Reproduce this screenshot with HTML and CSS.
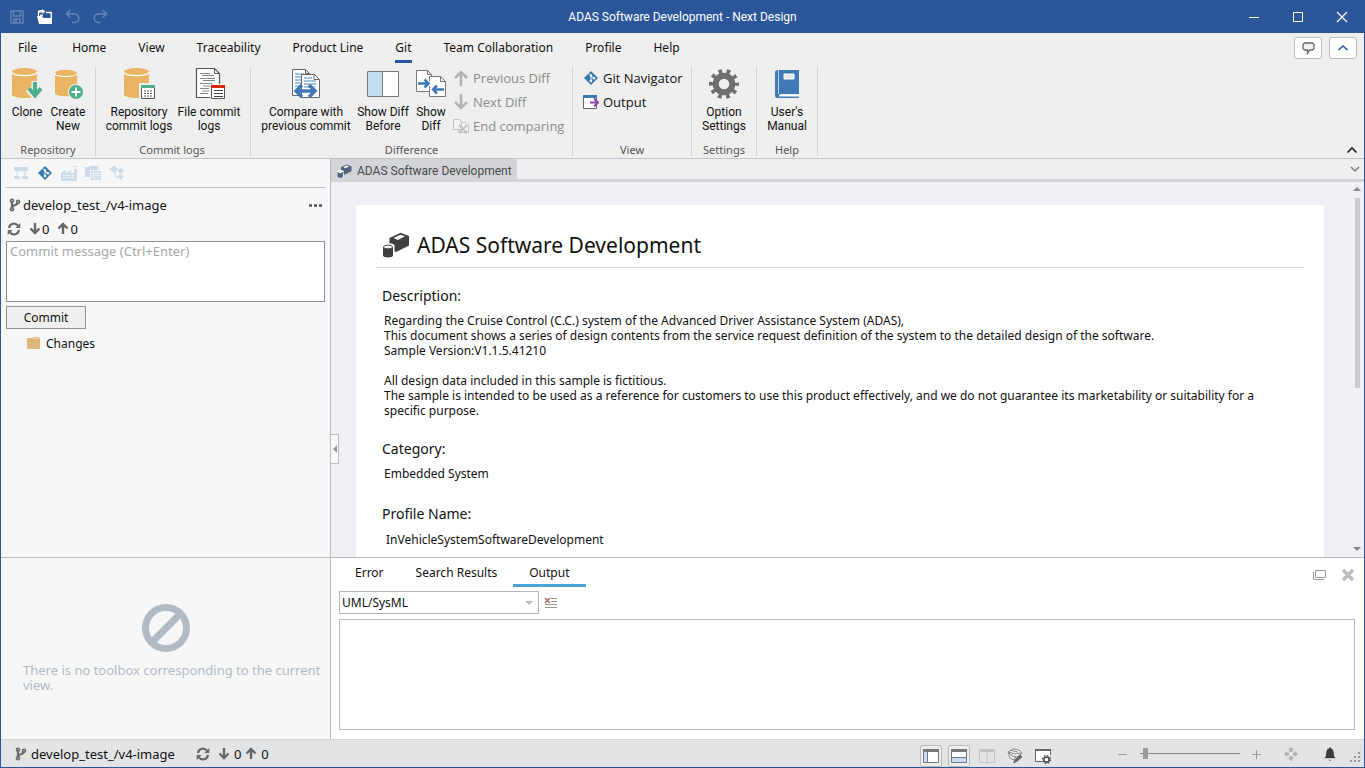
FILE: index.html
```
<!DOCTYPE html>
<html lang="en">
<head>
    <meta charset="UTF-8">
    <meta name="viewport" content="width=device-width, initial-scale=1.0">
    <title>ADAS Software Development - Next Design</title>
    <link rel="stylesheet" href="styles.css">
</head>
<body>
    <!-- Shared icons -->
    <svg class="icon-defs" aria-hidden="true">
        <symbol id="i-branch" viewBox="0 0 12 14">
            <path d="M3 3v8M3 9c0-2 6-1 6-5" fill="none" stroke="#6a6a6a" stroke-width="2.2"/>
            <circle cx="3" cy="2.700" r="2.300" fill="#6a6a6a"/><circle cx="3" cy="11.300" r="2.300" fill="#6a6a6a"/><circle cx="9" cy="3.700" r="2.300" fill="#6a6a6a"/>
            <path d="M3 2.200v1M3 10.800v1M9 3.200v1" stroke="#eee" stroke-width="1"/>
        </symbol>
        <symbol id="i-sync" viewBox="0 0 14 14">
            <path d="M2 6a5 5 0 0 1 9-2.300M12 8a5 5 0 0 1-9 2.300" fill="none" stroke="#6a6a6a" stroke-width="2.2"/>
            <path d="M13.300 1v5h-5zM.7 13V8h5z" fill="#6a6a6a"/>
        </symbol>
        <symbol id="i-down" viewBox="0 0 12 14">
            <path d="M6 1v10M1.500 6.500 6 11l4.500-4.500" fill="none" stroke="#666" stroke-width="2.4"/>
        </symbol>
        <symbol id="i-up" viewBox="0 0 12 14">
            <path d="M6 12V2M1.500 6.500 6 2l4.500 4.500" fill="none" stroke="#666" stroke-width="2.4"/>
        </symbol>
        <symbol id="i-git" viewBox="0 0 14 14">
            <path d="M7 0l7 7-7 7-7-7z" fill="#3a78b0"/>
            <path d="M5 2.500 7 4.500V10M7 5l3 2.500" fill="none" stroke="#fff" stroke-width="1"/>
            <circle cx="7" cy="4.500" r="1.200" fill="#fff"/><circle cx="7" cy="10" r="1.300" fill="#fff"/><circle cx="10" cy="7.300" r="1.200" fill="#fff"/>
        </symbol>
        <symbol id="i-model" viewBox="0 0 28 26">
            <path d="M7.500 6 18.500.800 27 4v9.500l-13 6.500-6.500-3z" fill="currentColor"/>
            <path d="m11.500 6 7-3.300 4.500 1.600-7 3.700z" fill="#fff"/>
            <path d="M0 13.500c0-3 12-3 12.500 0V26H0z" fill="#fff"/>
            <path d="M1 15v8.500c0 2.600 10 2.600 10 0V15z" fill="currentColor"/>
            <ellipse cx="6" cy="15" rx="4.500" ry="1.900" fill="#fff" stroke="currentColor"/>
        </symbol>
        <symbol id="i-model-small" viewBox="0 0 28 26">
            <path d="M7.500 6 18.500.800 27 4v9.500l-13 6.500-6.500-3z" fill="currentColor"/>
            <path d="m11.500 6 7-3.300 4.500 1.600-7 3.700z" fill="#fff"/>
            <path d="M0 13.500c0-3 12-3 12.500 0V26H0z" fill="#eee"/>
            <path d="M1 15v8.500c0 2.600 10 2.600 10 0V15z" fill="currentColor"/>
            <ellipse cx="6" cy="15.500" rx="3.500" ry="1.500" fill="#fff"/>
        </symbol>
        <symbol id="i-db" viewBox="0 0 26 31">
            <path d="M0 3.500v23c0 4.600 25 4.600 25 0v-23z" fill="#e9b562"/>
            <ellipse cx="12.500" cy="4" rx="12.500" ry="4" fill="#e9b562"/>
            <path d="M0 4c0 4.800 25 4.800 25 0" fill="none" stroke="#fff" stroke-width="1.200"/>
        </symbol>
    </svg>

    <div class="window">
        <header class="titlebar">
            <div class="quick-access">
                <button class="quick-btn dim" aria-label="Save"><svg width="14" height="14" viewBox="0 0 14 14"><path d="M1 1h12v12H1zM3.500 1v5h7V1M4 13V9h6v4" fill="none" stroke="#fff" stroke-width="1.500"/><path d="M5 10h2v3H5z" fill="#fff"/></svg></button>
                <button class="quick-btn" aria-label="Open"><svg width="15" height="15" viewBox="0 0 15 15"><path d="M9 3.500h5.300v10.800H2.500" fill="none" stroke="#fff" stroke-width="1.300"/><path d="M0 7h5l1.500 2H14v6H2z" fill="#fff"/><path d="M1.500 7V3" stroke="#fff" stroke-width="1.300"/><path d="M3.500 5.500h2L6 7H3zM1 2c1-1 2.500-1.200 4-1V0l3.500 2.500L5.500 5V3.500H1z" fill="#fff"/></svg></button>
                <button class="quick-btn dim" aria-label="Undo"><svg width="15" height="15" viewBox="0 0 15 15"><path d="M5.500 1 1.500 4.800l4 3.800M2 4.800h7.500a4.300 4.300 0 0 1 0 8.700H7" fill="none" stroke="#fff" stroke-width="1.700"/></svg></button>
                <button class="quick-btn dim" aria-label="Redo"><svg width="15" height="15" viewBox="0 0 15 15"><path d="m9.500 1 4 3.800-4 3.800M13 4.800H5.500a4.300 4.300 0 0 0 0 8.700H8" fill="none" stroke="#fff" stroke-width="1.700"/></svg></button>
            </div>
            <h1 class="app-title">ADAS Software Development - Next Design</h1>
            <div class="window-controls">
                <button class="window-btn" aria-label="Minimize"><svg width="12" height="12"><path d="M1 6.500h10" stroke="#fff"/></svg></button>
                <button class="window-btn" aria-label="Maximize"><svg width="12" height="12"><path d="M1.500 1.500h9v9h-9z" fill="none" stroke="#fff"/></svg></button>
                <button class="window-btn" aria-label="Close"><svg width="12" height="12"><path d="m1 1 10 10M11 1 1 11" stroke="#fff" stroke-width="1.200"/></svg></button>
            </div>
        </header>

        <nav class="menu">
            <a class="menu-item file" href="#">File</a>
            <a class="menu-item" href="#">Home</a>
            <a class="menu-item" href="#">View</a>
            <a class="menu-item" href="#">Traceability</a>
            <a class="menu-item" href="#">Product Line</a>
            <a class="menu-item active" href="#">Git</a>
            <a class="menu-item" href="#">Team Collaboration</a>
            <a class="menu-item" href="#">Profile</a>
            <a class="menu-item" href="#">Help</a>
            <div class="menu-actions">
                <button class="box-btn" aria-label="Feedback"><svg width="13" height="13" viewBox="0 0 13 13"><path d="M2.500 1h8l1.500 1.500v4L10.500 8H7.500L5.500 11.500V8h-3L1 6.500v-4z" fill="#f4f4f4" stroke="#666" stroke-width="1.300"/></svg></button>
                <button class="box-btn" aria-label="Pin ribbon"><svg width="12" height="12"><path d="m1.500 8 4.500-4 4.500 4" fill="none" stroke="#2b579a" stroke-width="1.600"/></svg></button>
            </div>
        </nav>

        <section class="ribbon">
            <div class="group">
                <div class="group-buttons">
                    <button class="big-btn w-small">
                        <svg width="34" height="34" viewBox="0 0 34 34"><use href="#i-db" x="2" y="1" width="26" height="31"/><path d="M25 14v15M18.500 22l6.500 7 6.500-7" fill="none" stroke="#efefef" stroke-width="7"/><path d="M25 15v13M19 21.500l6 7 6-7" fill="none" stroke="#4caf8a" stroke-width="4"/></svg>
                        <span>Clone</span>
                    </button>
                    <button class="big-btn w-create">
                        <svg width="34" height="34" viewBox="0 0 34 34"><use href="#i-db" x="4" y="2" width="23" height="29"/><circle cx="25" cy="25" r="8" fill="#efefef"/><circle cx="25" cy="25" r="7" fill="#4caf8a"/><path d="M20.500 25h9M25 20.500v9" stroke="#fff" stroke-width="2"/></svg>
                        <span>Create<br>New</span>
                    </button>
                </div>
                <div class="group-name">Repository</div>
            </div>

            <div class="group group-logs">
                <div class="group-buttons">
                    <button class="big-btn w-repo">
                        <svg width="34" height="34" viewBox="0 0 34 34"><use href="#i-db" x="2" y="1" width="26" height="31"/><path d="M18.500 17.500h14v15h-14z" fill="#fff" stroke="#efefef" stroke-width="3"/><path d="M19.500 18.500h13v13h-13z" fill="#fff" stroke="#555"/><path d="M19 18h14v3H19z" fill="#4caf8a"/><path d="M22 24h2m1 0h2m1 0h2M22 26.500h2m1 0h2m1 0h2M22 29h2m1 0h2m1 0h2" stroke="#555"/></svg>
                        <span>Repository<br>commit logs</span>
                    </button>
                    <button class="big-btn w-file">
                        <svg width="34" height="34" viewBox="0 0 34 34"><path d="M4.500 1.500h18l5 5v24h-23z" fill="#fff" stroke="#555" stroke-width="1.200"/><path d="M22.500 1.500v5h5" fill="none" stroke="#555"/><path d="M8 6.500h10M10 8.500h12M8 11.500h15M11 13.500h12M8 16.500h12M11 19h7M8 21.500h9M10 24h7M8 26.500h8" stroke="#888"/><path d="M18 17h16v16H18z" fill="#efefef"/><path d="M19.500 18.500h13v13h-13z" fill="#fff" stroke="#555"/><path d="M19 18h14v3H19z" fill="#db2b0b"/><path d="M22 23.500h9M22 26.500h9M22 29.500h9" stroke="#444"/></svg>
                        <span>File commit<br>logs</span>
                    </button>
                </div>
                <div class="group-name">Commit logs</div>
            </div>

            <div class="group">
                <div class="group-buttons">
                    <button class="big-btn w-compare">
                        <svg width="34" height="34" viewBox="0 0 34 34"><path d="M3.500 2.500h13l4 4v22h-17z" fill="#fff" stroke="#666"/><path d="M16.500 2.500v4h4" fill="none" stroke="#666"/><path d="M6 7h9M6 10h11M6 13h7M6 16h7M6 19h7" stroke="#83b3da" stroke-width="1.500"/><path d="M12.500 7.500h13l5 5v18h-18z" fill="#fff" stroke="#666"/><path d="M25 7.500v5h5" fill="none" stroke="#666"/><path d="M15 11h8M15 14h12M15 17h12M15 20h11" stroke="#83b3da" stroke-width="1.500"/><path d="m13 18-6 6 6 6M20 18l6 6-6 6M8 24h17" fill="none" stroke="#3f79b5" stroke-width="3.400"/></svg>
                        <span>Compare with<br>previous commit</span>
                    </button>
                    <button class="big-btn w-before">
                        <svg width="34" height="34" viewBox="0 0 34 34"><path d="M1.500 4.500h31v25h-31z" fill="#fff" stroke="#777"/><path d="M2 5h15v24H2z" fill="#c3e0f3"/><path d="M16.500 4.500v25" stroke="#777"/></svg>
                        <span>Show Diff<br>Before</span>
                    </button>
                    <button class="big-btn w-small">
                        <svg width="34" height="34" viewBox="0 0 34 34"><path d="M2.500 3.500h11l4 4v17h-15zM13.500 3.500v4h4" fill="#fff" stroke="#777"/><path d="M15.500 9.500h11l5 5v15h-16zM26.500 9.500v5h5" fill="#fff" stroke="#777"/><path d="M4 16.500h11M10.500 12l4.500 4.500-4.500 4.500" fill="none" stroke="#fff" stroke-width="4"/><path d="M4 16.500h10M10.500 12.500l4 4-4 4" fill="none" stroke="#3f79b5" stroke-width="2.500"/><path d="M30 22.500H19M23 18.500l-4 4 4 4" fill="none" stroke="#3f79b5" stroke-width="2.500"/></svg>
                        <span>Show<br>Diff</span>
                    </button>
                    <div class="small-list w-diff">
                        <button class="small-btn" disabled><svg width="16" height="16"><path d="M8 16V3M2 8l6-6 6 6" fill="none" stroke="#b3b3b3" stroke-width="2.600"/></svg>Previous Diff</button>
                        <button class="small-btn" disabled><svg width="16" height="16"><path d="M8 0v13M2 8l6 6 6-6" fill="none" stroke="#b3b3b3" stroke-width="2.600"/></svg>Next Diff</button>
                        <button class="small-btn" disabled><svg width="16" height="16"><path d="M.500 1.500h6l2 2v8h-8zM9 4.500h4l2.500 2.500v7.500H5.500v-3" fill="#f4f4f4" stroke="#c6c6c6"/><path d="m6 7 8 8M14 7l-8 8" stroke="#c0c0c0" stroke-width="2"/></svg>End comparing</button>
                    </div>
                </div>
                <div class="group-name">Difference</div>
            </div>

            <div class="group group-view">
                <div class="group-buttons">
                    <div class="small-list w-view">
                        <button class="small-btn"><svg width="16" height="16"><use href="#i-git" x="1" y="1" width="14" height="14"/></svg>Git Navigator</button>
                        <button class="small-btn"><svg width="16" height="16"><path d="M.500 1.500h13v13H.500z" fill="#fff" stroke="#666"/><path d="M0 1h14v3H0z" fill="#3a78b0"/><path d="M11 6h5v5h-5z" fill="#efefef"/><path d="M7 8.500h8M11 4.500l4 4-4 4" fill="none" stroke="#8e44ad" stroke-width="2"/></svg>Output</button>
                    </div>
                </div>
                <div class="group-name">View</div>
            </div>

            <div class="group">
                <div class="group-buttons">
                    <button class="big-btn w-option">
                        <svg width="34" height="34" viewBox="-17 -17 34 34"><circle r="8.300" fill="none" stroke="#6f6f6f" stroke-width="6"/><circle r="12.500" fill="none" stroke="#6f6f6f" stroke-width="5" stroke-dasharray="3.600 4.254" stroke-dashoffset="1.800"/></svg>
                        <span>Option<br>Settings</span>
                    </button>
                </div>
                <div class="group-name">Settings</div>
            </div>

            <div class="group">
                <div class="group-buttons">
                    <button class="big-btn w-manual">
                        <svg width="34" height="34" viewBox="0 0 34 34"><path d="M8 3h21v24H10v2h19v2H7a2 2 0 0 1-2-2V5c0-1 1-2 3-2z" fill="#3f7ab6"/><path d="M9 28h20v1.500H9z" fill="#fff"/><path d="M8.500 3v24" stroke="#dce8f4" stroke-width=".8"/><path d="M14 7h10v5H14z" fill="#dfe9f6" stroke="#fff"/></svg>
                        <span>User's<br>Manual</span>
                    </button>
                </div>
                <div class="group-name">Help</div>
            </div>
            <button class="collapse-btn" aria-label="Collapse ribbon"><svg width="12" height="12"><path d="m1.500 8.500 4.500-4.500 4.500 4.500" fill="none" stroke="#222" stroke-width="1.600"/></svg></button>
        </section>

        <main class="workspace">
            <aside class="sidebar">
                <section class="navigator">
                    <div class="nav-icons">
                        <button class="icon-btn" aria-label="Model"><svg width="16" height="16"><path d="M1 2h14v4H1zM1 11h6v3H1zM9 11h6v3H9z" fill="#ccdbe7"/><path d="M4 6v6M12 6v6" stroke="#ccdbe7"/></svg></button>
                        <button class="icon-btn" aria-label="Git"><svg width="16" height="16"><use href="#i-git" x="1" y="1" width="14" height="14"/></svg></button>
                        <button class="icon-btn" aria-label="Product line"><svg width="16" height="16"><path d="M0 16V8l5-3v3l5-3v3h3V4h3v12zM12 1h4v1h-4z" fill="#ccdbe7"/><path d="M2 10.500h12M2 12.500h12" stroke="#f7f7f7" stroke-dasharray="2 1"/></svg></button>
                        <button class="icon-btn" aria-label="Documents"><svg width="16" height="16"><path d="M0 2h4l1-1h8v4H5v7H0z" fill="#ccdbe7"/><path d="M6.700 6.700h8.600v7.600H6.700zM8 9.500h6M8 12h6" fill="#f7f7f7" stroke="#ccdbe7" stroke-width="1.500"/></svg></button>
                        <button class="icon-btn" aria-label="Relations"><svg width="16" height="16"><path d="m0 4.500 5-4 4 3-3.500 4.500zM11 3l4 2-3 4-3.500-3zM11 9l4 2.500-3 3.500-4-3z" fill="#ccdbe7"/><path d="M6 6v6h4" fill="none" stroke="#ccdbe7"/></svg></button>
                    </div>
                    <div class="branch-row">
                        <svg width="12" height="14"><use href="#i-branch"/></svg>
                        <span>develop_test_/v4-image</span>
                        <button class="icon-btn more" aria-label="More"><svg width="16" height="16"><path d="M1 8.500h3M6 8.500h3M11 8.500h3" stroke="#555" stroke-width="2.600"/></svg></button>
                    </div>
                    <div class="sync-row">
                        <button class="icon-btn sync" aria-label="Fetch"><svg width="14" height="14"><use href="#i-sync"/></svg></button>
                        <button class="sync-btn"><svg width="12" height="14"><use href="#i-down"/></svg>0</button>
                        <button class="sync-btn"><svg width="12" height="14"><use href="#i-up"/></svg>0</button>
                    </div>
                    <textarea class="commit-message" aria-label="Commit message" placeholder="Commit message (Ctrl+Enter)"></textarea>
                    <button class="commit-btn">Commit</button>
                    <div class="changes">
                        <svg width="14" height="12"><path d="M0 1h13v11H0z" fill="#deb77c"/><path d="M6 .500h6v1.500H5z" fill="#f7f7f7" stroke="#deb77c"/></svg>
                        <span>Changes</span>
                    </div>
                </section>
                <section class="toolbox">
                    <svg width="50" height="50" viewBox="0 0 50 50"><circle cx="25" cy="25" r="20.500" fill="none" stroke="#b1bbc6" stroke-width="7"/><path d="M39 11 11 39" stroke="#b1bbc6" stroke-width="7"/></svg>
                    <p>There is no toolbox corresponding to the current view.</p>
                </section>
            </aside>

            <div class="content">
                <section class="editor">
                    <div class="doc-tabs">
                        <a class="doc-tab" href="#"><svg width="15" height="14"><use href="#i-model-small"/></svg>ADAS Software Development</a>
                        <button class="icon-btn" aria-label="Open documents"><svg width="10" height="10"><path d="m1 3 4 4 4-4" fill="none" stroke="#777" stroke-width="1.500"/></svg></button>
                    </div>
                    <div class="doc-view">
                        <button class="splitter" aria-label="Collapse sidebar"><svg width="4" height="8"><path d="M4 0v8L0 4z" fill="#999"/></svg></button>
                        <article class="doc-page">
                            <h2 class="doc-title"><svg width="30" height="26"><use href="#i-model"/></svg>ADAS Software Development</h2>
                            <h3>Description:</h3>
                            <p>Regarding the Cruise Control (C.C.) system of the Advanced Driver Assistance System (ADAS),<br>This document shows a series of design contents from the service request definition of the system to the detailed design of the software.<br>Sample Version:V1.1.5.41210<br><br>All design data included in this sample is fictitious.<br>The sample is intended to be used as a reference for customers to use this product effectively, and we do not guarantee its marketability or suitability for a specific purpose.</p>
                            <h3>Category:</h3>
                            <p class="category">Embedded System</p>
                            <h3>Profile Name:</h3>
                            <p class="profile-name">InVehicleSystemSoftwareDevelopment</p>
                        </article>
                        <div class="scrollbar">
                            <svg width="8" height="4"><path d="M0 4h8L4 0z" fill="#888"/></svg>
                            <div class="scroll-thumb"></div>
                            <svg width="8" height="4"><path d="M0 0h8L4 4z" fill="#888"/></svg>
                        </div>
                    </div>
                </section>

                <section class="output">
                    <div class="output-tabs">
                        <a class="output-tab" href="#">Error</a>
                        <a class="output-tab" href="#">Search Results</a>
                        <a class="output-tab active" href="#">Output</a>
                        <div class="output-actions">
                            <button class="icon-btn" aria-label="Float"><svg width="14" height="14"><path d="M3.500 2.500h10v7h-10zM1.500 4v7.500H12" fill="none" stroke="#999"/></svg></button>
                            <button class="icon-btn" aria-label="Close panel"><svg width="14" height="14"><path d="m2 2 10 10M12 2 2 12" stroke="#bdbdbd" stroke-width="3.500"/></svg></button>
                        </div>
                    </div>
                    <div class="output-filter">
                        <div class="select-box">
                            <select aria-label="Output source">
                                <option>UML/SysML</option>
                            </select>
                        </div>
                        <button class="icon-btn" aria-label="Clear output"><svg width="14" height="14"><path d="M7 2.500h6M7 5.500h6M1 8.500h12M1 11.500h12" stroke="#999"/><path d="m1 2 5 5M6 2 1 7" stroke="#b85c50" stroke-width="1.300"/></svg></button>
                    </div>
                    <textarea class="output-text" aria-label="Output" readonly></textarea>
                </section>
            </div>
        </main>

        <footer class="statusbar">
            <div class="status-branch"><svg width="12" height="14"><use href="#i-branch"/></svg>develop_test_/v4-image</div>
            <div class="status-sync">
                <svg class="sync-icon" width="14" height="14"><use href="#i-sync"/></svg>
                <svg width="12" height="14"><use href="#i-down"/></svg>0
                <svg width="12" height="14"><use href="#i-up"/></svg>0
            </div>
            <div class="status-views">
                <button class="view-btn on" aria-label="Left pane"><svg width="16" height="16"><path d="M.500 1.500h15v13H.500z" fill="#fff" stroke="#777"/><path d="M0 1h16v3H0z" fill="#777"/><path d="M1 4h3v10H1z" fill="#c7ddf7"/><path d="M4.500 4v10" stroke="#777"/></svg></button>
                <button class="view-btn on" aria-label="Bottom pane"><svg width="16" height="16"><path d="M.500 1.500h15v13H.500z" fill="#fff" stroke="#777"/><path d="M0 1h16v3H0z" fill="#777"/><path d="M1 10h14v4H1z" fill="#c7ddf7"/><path d="M1 9.500h14" stroke="#777"/></svg></button>
                <button class="view-btn" aria-label="Split view"><svg width="16" height="16"><path d="M.500 1.500h15v13H.500zM8 3v11" fill="none" stroke="#c3c3c3"/><path d="M0 1h16v3H0z" fill="#c3c3c3"/></svg></button>
                <button class="view-btn" aria-label="Edit model"><svg width="16" height="16"><path d="M1 4 6 1l6 1 3 3-5 4-5-1zM1 4l7 2 6-1M4 2.500l7 1.500M1 4l2 6 4 2 2-4" fill="#f5f5f5" stroke="#888"/><path d="m13 6.500 2.500 2.500-6 5L6 15.500 7.500 12z" fill="#666"/></svg></button>
                <button class="view-btn" aria-label="View settings"><svg width="16" height="16"><path d="M7 13.500H.500v-12h15V7" fill="#fff" stroke="#666"/><path d="M0 1h16v2H0z" fill="#666"/><circle cx="11.500" cy="11.500" r="2.600" fill="#fff" stroke="#444" stroke-width="1.500"/><circle cx="11.500" cy="11.500" r="4" fill="none" stroke="#444" stroke-width="1.200" stroke-dasharray="1.570 1.570"/></svg></button>
            </div>
            <div class="zoom">
                <button class="icon-btn" aria-label="Zoom out"><svg width="10" height="10"><path d="M0 5.500h9" stroke="#999"/></svg></button>
                <input class="zoom-range" type="range" min="0" max="100" value="3" aria-label="Zoom">
                <button class="icon-btn" aria-label="Zoom in"><svg width="10" height="10"><path d="M0 5.500h9M4.500 1v9" stroke="#999"/></svg></button>
            </div>
            <div class="status-end">
                <button class="icon-btn" aria-label="Fit"><svg width="16" height="16"><path d="m8 1 3 3H9.500v2h-3V4H5zM8 15l-3-3h1.500v-2h3v2H11zM1 8l3-3v1.500h2v3H4V11zM15 8l-3 3V9.500h-2v-3h2V5z" fill="#b0b0b0"/></svg></button>
                <button class="icon-btn" aria-label="Notifications"><svg width="16" height="16"><path d="M1.500 12.500 3 11c.8-1 .8-3 1-5 .3-2 1.500-3.500 3-4V1h2v1c1.500.5 2.700 2 3 4 .2 2 .2 4 1 5l1.500 1.500zM6 13.500h4L8.500 15h-1z" fill="#3c3c3c" stroke="#f4f4f4" stroke-width=".6"/></svg></button>
            </div>
            <svg class="grip" width="11" height="11"><path d="M8 1h2M4 5h2M8 5h2M0 9h2M4 9h2M8 9h2" stroke="#999" stroke-width="2"/></svg>
        </footer>
    </div>
</body>
</html>
```
FILE: styles.css
```
* {
    box-sizing: border-box;
}

body {
    margin: 0;
    font-family: "Noto Sans", sans-serif;
    font-size: 13px;
    color: #111;
}

button, input, select, textarea {
    font: inherit;
    color: inherit;
}

button {
    padding: 0;
    border: none;
    background: none;
}

a {
    color: inherit;
    text-decoration: none;
}

svg {
    display: block;
    flex: none;
}

h1, h2, h3, p {
    margin: 0;
    font-weight: normal;
}

.icon-defs {
    display: none;
}

.window {
    display: flex;
    flex-direction: column;
    height: 100vh;
    border: 1px solid #2b579a;
    border-top: none;
    background: #efefef;
}

/* Title bar */
.titlebar {
    display: grid;
    grid-template-columns: 1fr auto 1fr;
    align-items: center;
    height: 33px;
    background: #2b579a;
    color: #fff;
}

.quick-access {
    display: flex;
    gap: 13px;
    padding-left: 9px;
}

.dim {
    opacity: 0.25;
}

.app-title {
    font-family: Roboto, sans-serif;
    font-size: 12px;
}

.window-controls {
    display: flex;
    justify-content: flex-end;
}

.window-btn {
    display: flex;
    justify-content: center;
    width: 44px;
}

/* Menu */
.menu {
    display: flex;
    gap: 32px;
    height: 30px;
    padding: 0 7px 0 17px;
    font-size: 12px;
}

.menu-item {
    padding-top: 6px;
    line-height: 18px;
}

.menu-item.file {
    margin-right: 3px;
}

.menu-item.active {
    border-bottom: 3px solid #2b579a;
}

.menu-actions {
    display: flex;
    gap: 7px;
    margin-left: auto;
    padding-top: 4px;
}

.box-btn {
    display: flex;
    align-items: center;
    justify-content: center;
    width: 28px;
    height: 22px;
    border: 1px solid #bbb;
    border-radius: 3px;
    background: #fff;
}

/* Ribbon */
.ribbon {
    display: flex;
    height: 96px;
    padding: 4px 0 2px;
    border-bottom: 1px solid #c3c3c8;
}

.group {
    display: flex;
    flex-direction: column;
    padding: 0 6px;
    border-right: 1px solid #d2d2d6;
}

.group-logs {
    padding-right: 8px;
}

.group-view {
    padding: 0 10px;
}

.group-buttons {
    display: flex;
    flex: 1;
}

.group-name {
    color: #555;
    font-size: 11px;
    line-height: 13px;
    text-align: center;
}

.big-btn {
    display: flex;
    flex-direction: column;
    align-items: center;
    gap: 4px;
    font-family: Roboto, sans-serif;
    font-size: 12px;
    line-height: 14px;
    white-space: nowrap;
}

.w-small {
    width: 40px;
}

.w-create {
    width: 42px;
}

.w-repo {
    width: 74px;
}

.w-file {
    width: 66px;
}

.w-compare {
    width: 98px;
}

.w-before {
    width: 56px;
}

.w-option {
    width: 52px;
}

.w-manual {
    width: 48px;
}

.small-list {
    display: flex;
    flex-direction: column;
}

.w-diff {
    width: 115px;
    padding-left: 2px;
}

.w-view {
    width: 98px;
}

.small-btn {
    display: flex;
    align-items: center;
    gap: 4px;
    height: 24px;
    padding-bottom: 2px;
    font-family: "Open Sans", sans-serif;
    white-space: nowrap;
}

.small-btn:disabled {
    color: #8c8c8c;
}

.collapse-btn {
    align-self: flex-end;
    margin: 0 6px 0 auto;
}

/* Workspace */
.workspace {
    display: grid;
    grid-template-columns: 330px 1fr;
    flex: 1;
    min-height: 0;
}

.sidebar,
.content {
    display: grid;
    grid-template-rows: 1fr 182px;
    min-width: 0;
    min-height: 0;
}

.sidebar {
    border-right: 1px solid #bcbcc0;
    background: #f7f7f7;
}

.navigator {
    display: flex;
    flex-direction: column;
    padding: 0 5px;
}

.nav-icons {
    display: flex;
    gap: 8px;
    height: 29px;
    padding: 0 7px;
    border-bottom: 1px solid #c3c3c7;
}

.branch-row {
    display: flex;
    align-items: center;
    gap: 2px;
    height: 33px;
    padding-left: 3px;
}

.more {
    margin-left: auto;
    margin-right: 1px;
}

.sync-row {
    display: flex;
    align-items: center;
    gap: 8px;
    height: 16px;
    margin-bottom: 4px;
    padding-left: 1px;
}

.sync-btn {
    display: flex;
    align-items: center;
    gap: 1px;
}

.commit-message {
    height: 61px;
    padding: 0 3px;
    border: 1px solid #929292;
    background: #fff;
    resize: none;
}

.commit-message::placeholder {
    color: #a9a9a9;
}

.commit-btn {
    width: 80px;
    height: 23px;
    margin-top: 4px;
    border: 1px solid #929292;
    background: #efefef;
    font-size: 12px;
}

.changes {
    display: flex;
    align-items: center;
    gap: 5px;
    height: 28px;
    padding-left: 21px;
    font-size: 12px;
}

.toolbox {
    display: flex;
    flex-direction: column;
    align-items: center;
    gap: 10px;
    padding: 45px 8px 0;
    border-top: 1px solid #bcbcc0;
    color: #b1bbc6;
    line-height: 15px;
}

.toolbox p {
    padding-left: 14px;
}

/* Document */
.editor {
    display: flex;
    flex-direction: column;
    min-height: 0;
}

.doc-tabs {
    display: flex;
    justify-content: space-between;
    height: 23px;
    padding-right: 4px;
    border-bottom: 3px solid #d3d4d8;
}

.doc-tab {
    display: flex;
    align-items: center;
    gap: 5px;
    height: 23px;
    padding: 0 5px 0 6px;
    background: #d3d4d8;
    color: #4b4b4b;
    font-family: Roboto, sans-serif;
    font-size: 12px;
}

.doc-tab svg {
    color: #52627a;
}

.doc-view {
    display: flex;
    flex: 1;
    min-height: 0;
    overflow: hidden;
    background: #f0f1f6;
}

.splitter {
    display: flex;
    align-items: center;
    justify-content: center;
    align-self: flex-end;
    width: 8px;
    height: 30px;
    margin: 0 17px 93px 0;
    border: 1px solid #bcbcc0;
    border-left: none;
    background: #fafafa;
}

.doc-page {
    flex: 1;
    margin: 23px 26px 0 0;
    padding: 20px 20px 0;
    border-radius: 3px 3px 0 0;
    background: #fff;
}

.doc-title {
    display: flex;
    align-items: center;
    gap: 6px;
    height: 43px;
    margin-bottom: 18px;
    padding: 0 0 2px 5px;
    border-bottom: 1px solid #dcdcdc;
    font-size: 21px;
}

.doc-title svg {
    color: #404040;
}

.doc-page h3 {
    margin-bottom: 8px;
    padding-left: 6px;
    font-size: 14px;
    line-height: 19px;
}

.doc-page p {
    margin-bottom: 21px;
    padding: 0 8px;
    font-size: 12px;
    line-height: 15px;
}

.doc-page p.category {
    margin-bottom: 23px;
}

.doc-page p.profile-name {
    padding: 1px 10px 0;
}

.scrollbar {
    display: flex;
    flex-direction: column;
    align-items: center;
    width: 14px;
    padding: 5px 0 6px;
}

.scroll-thumb {
    width: 5px;
    height: 190px;
    margin: 7px 0 auto;
    background: #cbcbcb;
}

/* Output */
.output {
    display: flex;
    flex-direction: column;
    padding: 0 9px 9px 8px;
    border-top: 1px solid #bcbcc0;
    background: #fff;
}

.output-tabs {
    display: flex;
    height: 29px;
    font-size: 12px;
}

.output-tab {
    padding: 6px 16px 0;
}

.output-tab.active {
    border-bottom: 3px solid #4ba5da;
}

.output-actions {
    display: flex;
    gap: 15px;
    margin-left: auto;
    padding-top: 5px;
}

.output-filter {
    display: flex;
    gap: 5px;
    height: 23px;
    margin: 4px 0 5px;
}

.select-box {
    position: relative;
    width: 200px;
}

.select-box select {
    width: 100%;
    height: 23px;
    padding: 0 2px;
    border: 1px solid #b5b5b5;
    border-radius: 0;
    background: #fff;
    font-size: 12px;
    appearance: none;
}

.select-box::after {
    content: "";
    position: absolute;
    top: 10px;
    right: 6px;
    border: 4px solid transparent;
    border-top-color: #bbb;
    pointer-events: none;
}

.output-text {
    flex: 1;
    border: 1px solid #b9b9b9;
    resize: none;
}

/* Status bar */
.statusbar {
    display: flex;
    align-items: center;
    height: 28px;
    padding: 0 3px 0 14px;
    border-top: 1px solid #d3d4d8;
    background: #e3e4e6;
}

.status-branch,
.status-sync {
    display: flex;
    align-items: center;
    gap: 4px;
}

.status-sync {
    margin-left: 21px;
}

.sync-icon {
    margin-right: 4px;
}

.status-views {
    display: flex;
    align-self: stretch;
    align-items: flex-end;
    gap: 6px;
    margin-left: auto;
}

.view-btn {
    display: flex;
    align-items: center;
    justify-content: center;
    width: 22px;
    height: 22px;
    border: 1px solid transparent;
}

.view-btn.on {
    border-color: #bbb;
    border-radius: 2px;
    background: #ededee;
}

.zoom {
    display: flex;
    align-items: center;
    gap: 12px;
    margin-left: 64px;
}

.zoom-range {
    width: 100px;
    height: 12px;
    margin: 0;
    background: linear-gradient(#858585, #858585) center / 100% 1px no-repeat;
    appearance: none;
}

.zoom-range::-webkit-slider-thumb {
    width: 5px;
    height: 11px;
    background: #999;
    appearance: none;
}

.status-end {
    display: flex;
    gap: 23px;
    margin-left: 21px;
}

.grip {
    align-self: flex-end;
    margin: 0 0 4px 12px;
}
```
